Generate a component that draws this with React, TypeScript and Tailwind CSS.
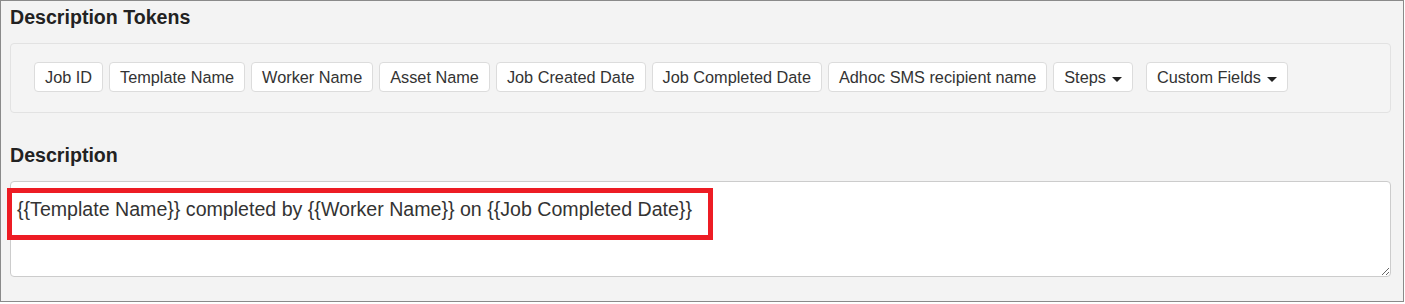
import { useState } from 'react';

const tokens = [
  'Job ID',
  'Template Name',
  'Worker Name',
  'Asset Name',
  'Job Created Date',
  'Job Completed Date',
  'Adhoc SMS recipient name',
];

function TokenButton({ label, dropdown, className = '' }: { label: string; dropdown?: boolean; className?: string }) {
  return (
    <button
      type="button"
      className={`inline-flex items-center h-[30px] px-[10px] bg-white border border-[#dcdcdc] rounded-[4px] text-[16.3px] leading-[18px] text-[#333] whitespace-nowrap ${className}`}
    >
      {label}
      {dropdown && (
        <span className="inline-block w-0 h-0 ml-[6px] mt-[5px] border-l-[5px] border-r-[5px] border-t-[5px] border-l-transparent border-r-transparent border-t-[#222]"></span>
      )}
    </button>
  );
}

export default function App() {
  const [text, setText] = useState('{{Template Name}} completed by {{Worker Name}} on {{Job Completed Date}}');

  return (
    <div className="w-[1405px] h-[304px] bg-white font-['Liberation_Sans',Arial,sans-serif]">
      <div className="w-[1404px] h-[302px] bg-[#f3f3f3] border border-[#8a8a8a] pl-[9px] pr-[12px] pt-[5px]">
        {/* Tokens */}
        <h2 className="text-[19.6px] leading-[22px] font-bold text-[#222]">Description Tokens</h2>
        <div className="mt-[15px] h-[70px] bg-[#f4f4f4] border border-[#e2e2e2] rounded-[4px] pl-[23px] pt-[18px] flex items-start">
          <div className="flex gap-[6px]">
            {tokens.map((t) => (
              <TokenButton key={t} label={t} />
            ))}
            <TokenButton label="Steps" dropdown />
            <TokenButton label="Custom Fields" dropdown className="ml-[7px]" />
          </div>
        </div>

        {/* Description */}
        <h2 className="mt-[31px] text-[19.6px] leading-[22px] font-bold text-[#222]">Description</h2>
        <div className="relative mt-[15px]">
          <textarea
            className="block w-full h-[96px] bg-white border border-[#cccccc] rounded-[4px] px-[6px] pt-[14px] text-[19.6px] leading-[27px] text-[#333] outline-none resize-y"
            value={text}
            onChange={(e) => setText(e.target.value)}
          />
          {/* highlight annotation */}
          <div className="absolute left-[-3px] top-[7px] w-[706px] h-[52px] border-[5px] border-[#ed1c24] pointer-events-none"></div>
        </div>
      </div>
    </div>
  );
}
